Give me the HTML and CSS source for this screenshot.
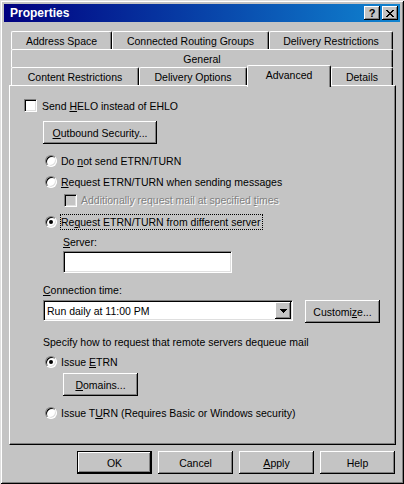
FILE: index.html
```html
<!DOCTYPE html>
<html>
<head>
<link rel="stylesheet" href="styles.css">
</head>
<body>
<div class="window">
    <div class="titlebar">
        <span class="title">Properties</span>
        <div class="caption-btns">
            <span class="cbtn">?</span>
            <span class="cbtn">
                <svg width="8" height="7" viewBox="0 0 8 7"><path d="M0 0h2v1H0z M6 0h2v1H6z M1 1h2v1H1z M5 1h2v1H5z M2 2h4v1H2z M3 3h2v1H3z M2 4h4v1H2z M1 5h2v1H1z M5 5h2v1H5z M0 6h2v1H0z M6 6h2v1H6z" fill="#000"/></svg>
            </span>
        </div>
    </div>

    <div class="content">
        <div class="tabs">
            <div class="tab-row">
                <div class="tab" style="width:101px">Address Space</div>
                <div class="tab" style="width:157px">Connected Routing Groups</div>
                <div class="tab" style="width:124px">Delivery Restrictions</div>
            </div>
            <div class="tab-row">
                <div class="tab" style="width:382px">General</div>
            </div>
            <div class="tab-row">
                <div class="tab" style="width:128px">Content Restrictions</div>
                <div class="tab" style="width:108px">Delivery Options</div>
                <div class="tab active" style="width:84px">Advanced</div>
                <div class="tab" style="width:62px">Details</div>
            </div>
        </div>

        <div class="panel">
            <div class="check-row helo-row">
                <span class="cb"></span>
                <span class="cb-text">Send <u>H</u>ELO instead of EHLO</span>
            </div>

            <div class="btn security-btn"><u>O</u>utbound Security...</div>

            <div class="row radio-row first-radio">
                <span class="radio"></span>
                <span class="label">Do <u>n</u>ot send ETRN/TURN</span>
            </div>
            <div class="row radio-row next-radio">
                <span class="radio"></span>
                <span class="label"><u>R</u>equest ETRN/TURN when sending messages</span>
            </div>
            <div class="row sub-check">
                <span class="cb disabled"></span>
                <span class="cb-text muted">Additionally request mail at specified <u>t</u>imes</span>
            </div>
            <div class="row radio-row focus-radio">
                <span class="radio on"></span>
                <span class="label focus">Re<u>q</u>uest ETRN/TURN from different server</span>
            </div>

            <div class="row server-label"><u>S</u>erver:</div>
            <div class="field server-field"></div>

            <div class="row time-label"><u>C</u>onnection time:</div>
            <div class="combo-row">
                <div class="combo">
                    <span>Run daily at 11:00 PM</span>
                    <span class="dropbtn">
                        <svg width="7" height="4" viewBox="0 0 7 4"><path d="M0 0h7v1H0z M1 1h5v1H1z M2 2h3v1H2z M3 3h1v1H3z" fill="#000"/></svg>
                    </span>
                </div>
                <div class="btn customize-btn">Customi<u>z</u>e...</div>
            </div>

            <div class="row specify-label">Specify how to request that remote servers dequeue mail</div>
            <div class="row radio-row etrn-radio">
                <span class="radio on"></span>
                <span class="label">Issue <u>E</u>TRN</span>
            </div>
            <div class="btn domains-btn"><u>D</u>omains...</div>
            <div class="row radio-row turn-radio">
                <span class="radio"></span>
                <span class="label">Issue T<u>U</u>RN (Requires Basic or Windows security)</span>
            </div>
        </div>

        <div class="dialog-buttons">
            <div class="btn default">OK</div>
            <div class="btn">Cancel</div>
            <div class="btn"><u>A</u>pply</div>
            <div class="btn">Help</div>
        </div>
    </div>
</div>
</body>
</html>
```

FILE: styles.css
```css
body {
    margin: 0;
    font-family: "Liberation Sans", Arial, sans-serif;
    font-size: 10.5px;
    color: #000;
}
.window {
    width: 404px;
    height: 484px;
    box-sizing: border-box;
    padding: 4px;
    background: #c4c4c4;
    box-shadow: inset 1px 1px #dfdfdf, inset -1px -1px #000,
                inset 2px 2px #fff, inset -2px -2px #808080;
}
.titlebar {
    height: 18px;
    display: flex;
    align-items: center;
    justify-content: space-between;
    padding: 0 2px 0 6px;
    background: linear-gradient(to right, #000080, #1084d0);
}
.title {
    color: #fff;
    font-weight: bold;
    font-size: 12px;
}
.caption-btns {
    display: flex;
    gap: 2px;
}
.cbtn {
    width: 16px;
    height: 14px;
    box-sizing: border-box;
    display: flex;
    align-items: center;
    justify-content: center;
    background: #c4c4c4;
    font-weight: bold;
    font-size: 11px;
    box-shadow: inset -1px -1px #000, inset 1px 1px #fff, inset -2px -2px #808080;
}
.content {
    padding: 9px 0 0 5px;
}

/* tabs */
.tabs {
    margin-left: 2px;
    width: 382px;
}
.tab-row {
    display: flex;
    height: 18px;
}
.tab {
    box-sizing: border-box;
    height: 18px;
    padding-top: 1px;
    line-height: 16px;
    text-align: center;
    white-space: nowrap;
    background: #c4c4c4;
    border-top: 1px solid #fff;
    border-left: 1px solid #fff;
    border-right: 1px solid #000;
    border-radius: 2px 2px 0 0;
    box-shadow: inset -1px 0 #808080;
}
.tab.active {
    height: 22px;
    margin: -2px 0 -2px;
    padding-top: 0;
    line-height: 19px;
    position: relative;
    z-index: 1;
}

/* property page */
.panel {
    width: 387px;
    height: 360px;
    box-sizing: border-box;
    padding-top: 13px;
    border: 1px solid;
    border-color: #fff #000 #000 #fff;
    box-shadow: inset -1px -1px #808080;
}
.row {
    display: flex;
    align-items: center;
    height: 16px;
    line-height: 16px;
    white-space: nowrap;
}
.check-row {
    display: flex;
    align-items: center;
    height: 13px;
}
.helo-row { margin-left: 14px; }
.cb {
    width: 13px;
    height: 13px;
    box-sizing: border-box;
    background: #fff;
    border: 1px solid;
    border-color: #808080 #fff #fff #808080;
    box-shadow: inset 1px 1px #000, inset -1px -1px #dfdfdf;
}
.cb.disabled { background: #c4c4c4; }
.cb-text { margin-left: 5px; }
.sub-check .cb-text { margin-left: 4px; }
.muted {
    color: #808080;
    text-shadow: 1px 1px #fff;
}
.radio {
    width: 12px;
    height: 12px;
    box-sizing: border-box;
    border-radius: 50%;
    background: #fff;
    border: 1px solid;
    border-color: #808080 #fff #fff #808080;
    box-shadow: inset 1px 1px #000, inset -1px -1px #dfdfdf;
    display: flex;
    align-items: center;
    justify-content: center;
}
.radio.on::after {
    content: "";
    width: 4px;
    height: 4px;
    border-radius: 50%;
    background: #000;
}
.label {
    margin-left: 3px;
    padding-right: 2px;
    border: 1px solid transparent;
    line-height: 14px;
}
.label.focus { border: 1px dotted #000; }
.radio-row { margin-left: 35px; }

.btn {
    box-sizing: border-box;
    width: 75px;
    height: 23px;
    display: flex;
    align-items: center;
    justify-content: center;
    white-space: nowrap;
    background: #c4c4c4;
    box-shadow: inset -1px -1px #000, inset 1px 1px #fff, inset -2px -2px #808080;
}
.btn.default {
    border: 1px solid #000;
}
.field, .combo {
    box-sizing: border-box;
    background: #fff;
    border: 1px solid;
    border-color: #808080 #fff #fff #808080;
    box-shadow: inset 1px 1px #000, inset -1px -1px #dfdfdf;
}

.security-btn { width: 114px; margin: 9px 0 0 33px; }
.first-radio { margin-top: 9px; }
.next-radio { margin-top: 5px; }
.sub-check { margin: 2px 0 0 54px; }
.focus-radio { margin-top: 6px; }
.server-label { margin: 4px 0 0 53px; }
.server-field { width: 169px; height: 22px; margin: 1px 0 0 53px; }
.time-label { margin: 9px 0 0 33px; }
.combo-row {
    display: flex;
    align-items: flex-start;
    margin: 2px 0 0 33px;
}
.combo {
    width: 250px;
    height: 21px;
    display: flex;
    align-items: center;
    justify-content: space-between;
    padding: 1px 1px 1px 3px;
}
.dropbtn {
    width: 16px;
    height: 17px;
    box-sizing: border-box;
    display: flex;
    align-items: center;
    justify-content: center;
    background: #c4c4c4;
    box-shadow: inset -1px -1px #000, inset 1px 1px #fff, inset -2px -2px #808080;
}
.customize-btn { margin-left: 12px; }
.specify-label { margin: 11px 0 0 33px; }
.etrn-radio { margin-top: 4px; }
.domains-btn { margin: 3px 0 0 53px; }
.turn-radio { margin-top: 9px; }

.dialog-buttons {
    width: 387px;
    display: flex;
    justify-content: flex-end;
    gap: 6px;
    margin-top: 6px;
    padding-right: 1px;
    box-sizing: border-box;
}
```
